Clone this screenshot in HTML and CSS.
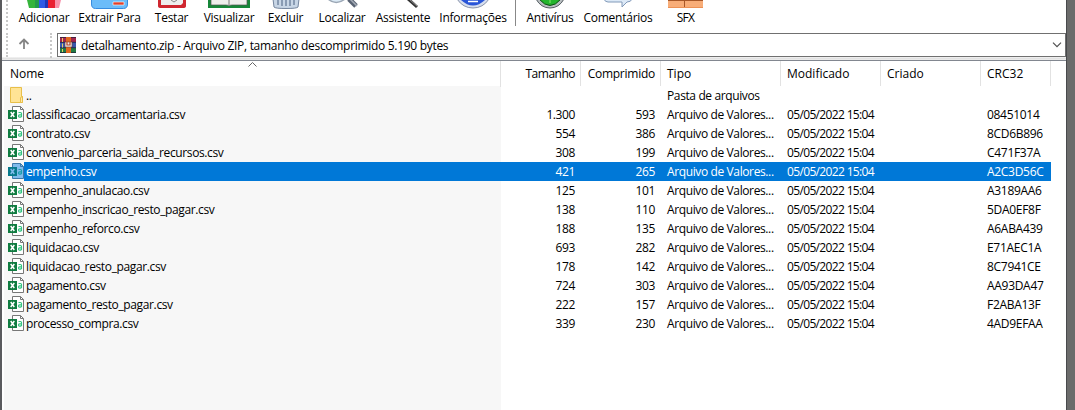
FILE: index.html
```html
<!DOCTYPE html>
<html lang="pt-BR">
<head>
<meta charset="utf-8">
<title>detalhamento.zip</title>
<link rel="stylesheet" href="styles.css">
</head>
<body>
<div class="window">
  <header class="toolbar">
    <div class="tool w-add"><svg width="34" height="9" viewBox="0 0 34 9"><path fill="#35b43b" d="M0 0h9v8H2z"/><path fill="#249a4a" d="M8 0h4v8H8z"/><path fill="#2f5be6" d="M12 0h7v8h-7z"/><path fill="#2038b8" d="M18 0h3v8h-3z"/><path fill="#e92032" d="M21 0h7v8h-7z"/><path fill="#f891ab" d="M28 0h6l-2 8h-4z"/></svg><span>Adicionar</span></div>
    <div class="tool w-ext"><svg width="37" height="9" viewBox="0 0 37 9"><path fill="#6cbcf9" stroke="#378ce0" d="M.5-1v5q0 4.500 4 4.500h28q4 0 4-4.500v-5"/><path fill="#e0402c" stroke="#fff" stroke-width=".6" d="M22 2h11v3H22z"/></svg><span>Extrair Para</span></div>
    <div class="tool w-test"><svg width="30" height="9" viewBox="0 0 30 9"><path fill="#cf2730" d="M1 0h28v6q0 2-3 2H4Q1 8 1 6z"/><path fill="#eee" d="M4 0h22v3l-2 2H4z"/><path fill="none" stroke="#888" d="M14 0l3 2 3-2"/></svg><span>Testar</span></div>
    <div class="tool w-view"><svg width="42" height="9" viewBox="0 0 42 9"><path fill="#168638" d="M0 0h42v8H0z"/><path fill="#eeeeec" stroke="#555" stroke-width=".7" d="M3-1v6h15q2 0 3 1 1-1 3-1h15v-6"/><path stroke="#777" d="M21 0v6"/></svg><span>Visualizar</span></div>
    <div class="tool w-del"><svg width="28" height="9" viewBox="0 0 28 9"><path fill="#c8d6e6" stroke="#75869e" d="M1-1l1 8q1 1.500 12 1.500T26 7l1-8"/><path stroke="#7488a2" stroke-width="1.500" d="M6 0v5m4-5v6m4-6v6m4-6v6m4-6v5"/></svg><span>Excluir</span></div>
    <div class="tool w-find"><svg width="34" height="9" viewBox="0 0 34 9"><path fill="#dbeaf6" stroke="#9ba7b5" stroke-width="1.500" d="M3-1q8 7 17 0"/><path stroke="#596373" stroke-width="5" d="M24-1l7 7"/><path stroke="#a4abb6" stroke-width="1.500" d="M24-2l8 8"/></svg><span>Localizar</span></div>
    <div class="tool w-wiz"><svg width="34" height="9" viewBox="0 0 34 9"><path stroke="#333" stroke-width="3" d="M21-2l10 9"/><path stroke="#999" d="M22-2l10 9"/></svg><span>Assistente</span></div>
    <div class="tool w-info"><svg width="34" height="9" viewBox="0 0 34 9"><path fill="#d6deee" stroke="#8994aa" d="M1-1q6 9 16 9t16-9"/><path fill="#2955d8" d="M5 0q12 11 24 0z"/><path stroke="#fff" stroke-width="1.500" d="M12 1.500h10"/></svg><span>Informações</span></div>
    <i class="tool-sep"></i>
    <div class="tool w-av"><svg width="30" height="9" viewBox="0 0 30 9"><path fill="#b9bec1" stroke="#555d62" d="M1-1q5 9 14 9t14-9"/><path fill="#24b52c" stroke="#124e18" d="M4-1q11 13 22 0z"/><path stroke="#8be573" d="M15 0v3"/></svg><span>Antivírus</span></div>
    <div class="tool w-com"><svg width="34" height="9" viewBox="0 0 34 9"><path fill="#dce9f7" stroke="#829ab9" d="M3-1q1 3 4 3h14v5l5-5q4 0 5-3"/></svg><span>Comentários</span></div>
    <div class="tool w-sfx"><svg width="35" height="9" viewBox="0 0 35 9"><path fill="#f8ad78" d="M0 0h35v8H0z"/><path stroke="#a75728" d="M0 .5h35M16.500 0v7"/><path stroke="#ec9155" d="M0 7.500h35"/></svg><span>SFX</span></div>
  </header>
  <div class="address">
    <div class="up"><svg width="12" height="12" viewBox="0 0 12 12" fill="none" stroke="#858585" stroke-width="1.800"><path d="M6 11V2M1.500 6L6 1.500 10.500 6"/></svg></div>
    <div class="path">
      <svg width="16" height="16" viewBox="0 0 16 16"><path fill="#a3264c" d="M0 0h16v5H0z"/><path fill="#3857ad" d="M0 5h16v6H0z"/><path fill="#237a42" d="M0 11h16v5H0z"/><path stroke="#20213b" stroke-width=".8" d="M0 .4h16M0 5.300h16M0 10.700h16M0 15.600h16"/><path stroke="#e7d260" d="M2.500 1v4m0 1.500v4m0 1.500v3"/><path fill="#df671e" d="M6 0h5v16H6z"/><path fill="#eee" stroke="#703c28" stroke-width=".6" d="M5 5h7v5H5z"/><path fill="none" stroke="#b44222" stroke-width="1.200" d="M7 5v3h3V5"/></svg>
      <span class="path-text">detalhamento.zip - Arquivo ZIP, tamanho descomprimido 5.190 bytes</span>
      <svg class="chev" width="10" height="6" viewBox="0 0 10 6" fill="none" stroke="#505050" stroke-width="1.200"><path d="M1 .7l4 4 4-4"/></svg>
    </div>
  </div>
  <main class="list">
    <div class="head">
      <span class="name">Nome<svg class="sort" width="9" height="5" viewBox="0 0 9 5" fill="none" stroke="#666"><path d="M.5 4.500l4-4 4 4"/></svg></span><span class="num size">Tamanho</span><span class="num">Comprimido</span><span>Tipo</span><span>Modificado</span><span>Criado</span><span>CRC32</span>
    </div>
    <div class="rows" id="rows"></div>
  </main>
</div>
<script src="files.js"></script>
</body>
</html>
```
FILE: files.js
```js
const files = [
  ["classificacao_orcamentaria.csv", "1.300", "593", "08451014"],
  ["contrato.csv", "554", "386", "8CD6B896"],
  ["convenio_parceria_saida_recursos.csv", "308", "199", "C471F37A"],
  ["empenho.csv", "421", "265", "A2C3D56C"],
  ["empenho_anulacao.csv", "125", "101", "A3189AA6"],
  ["empenho_inscricao_resto_pagar.csv", "138", "110", "5DA0EF8F"],
  ["empenho_reforco.csv", "188", "135", "A6ABA439"],
  ["liquidacao.csv", "693", "282", "E71AEC1A"],
  ["liquidacao_resto_pagar.csv", "178", "142", "8C7941CE"],
  ["pagamento.csv", "724", "303", "AA93DA47"],
  ["pagamento_resto_pagar.csv", "222", "157", "F2ABA13F"],
  ["processo_compra.csv", "339", "230", "4AD9EFAA"]
];
const folder = '<svg class="icon" width="16" height="16" viewBox="0 0 16 16"><path fill="#ffe495" stroke="#e8bf49" d="M2.500.5h11v9h1v6h-12z"/><path fill="#ffe9a9" stroke="#e8bf49" d="M12.500 15.500v-5l2-1v6z"/></svg>';
const csv = '<svg class="icon" width="16" height="16" viewBox="0 0 16 16"><path class="page" d="M4.500.5h8l3 3v12h-11z"/><path class="fold" d="M12.500.5v3h3"/><path class="badge" d="M0 4h9v9H0z"/><path class="cross" d="M2.700 6l3.600 5M6.300 6l-3.600 5"/><path class="letter" d="M10.500 6.500h2q1 0 1 1v3.800M13.500 8.800h-2q-1 0-1 1.200t1 1.200h1l1-1"/></svg>';
const row = (icon, name, size, packed, type, date, crc) =>
  `<div class="row${name === "empenho.csv" ? " selected" : ""}"><span class="name">${icon}<b>${name}</b></span><span class="num">${size}</span><span class="num">${packed}</span><span class="type">${type}</span><span class="date">${date}</span><span></span><span class="crc">${crc}</span></div>`;
document.getElementById("rows").innerHTML =
  row(folder, "..", "", "", "Pasta de arquivos", "", "") +
  files.map(f => row(csv, f[0], f[1], f[2], "Arquivo de Valores...", "05/05/2022 15:04", f[3])).join("");
```
FILE: styles.css
```css
* { box-sizing: border-box; }
body { margin: 0; width: 1075px; height: 410px; overflow: hidden; background: #6b6b6b; font: 12px/19px "Open Sans", sans-serif; color: #000; }
svg { display: block; flex: none; overflow: hidden; }
span { white-space: nowrap; }
.window { width: 1067px; height: 410px; background: #fff; border-left: 2px solid #5a5b5e; border-right: 1px solid #48494c; display: flex; flex-direction: column; }
.toolbar { height: 30px; display: flex; padding-left: 8px; flex: none; margin-left: 4px; border-left: 2px dotted #c8c8c8; }
.tool { display: flex; flex-direction: column; align-items: center; flex: none; line-height: 18px; letter-spacing: -.25px; }
.w-add { width: 56px; } .w-ext { width: 75px; } .w-test { width: 49px; } .w-view { width: 66px; }
.w-del { width: 47px; } .w-find { width: 66px; } .w-wiz { width: 56px; } .w-info { width: 84px; }
.tool-sep { width: 1px; height: 26px; background: #888; }
.w-av { width: 68px; } .w-com { width: 68px; } .w-sfx { width: 67px; letter-spacing: -.7px; }
.address { height: 31px; flex: none; display: flex; padding: 3px 0 3px 4px; border-bottom: 1px solid #828790; background: linear-gradient(#fff 27px, #dedede 28px, #eee 30px); }
.up { width: 51px; padding: 5px 0 0 10px; border-left: 2px dotted #c8c8c8; position: relative; }
.up::after { content: ""; position: absolute; left: 42px; top: 0; height: 25px; border-left: 2px dotted #c8c8c8; }
.path { flex: 1; height: 24px; border: 1px solid #707070; background: #fff; display: flex; align-items: center; padding: 0 3px 0 2px; }
.path-text { margin-left: 5px; flex: 1; letter-spacing: -.3px; }
.list { flex: 1; display: flex; flex-direction: column; }
.head, .row { display: grid; grid-template-columns: 499px 80px 80px 120px 100px 100px 70px; width: 1049px; }
.head { height: 25px; line-height: 26px; }
.head > span { border-right: 1px solid #e2e2e2; padding-left: 6px; }
.head .name { padding-left: 8px; position: relative; }
.sort { position: absolute; left: 246px; top: 1px; }
.head .num, .row .num { text-align: right; padding: 0 6px 0 0; }
.head .num { letter-spacing: -.25px; padding-right: 5px; }
.head .size { letter-spacing: -.5px; }
.rows { flex: 1; background: linear-gradient(90deg, #fff 2px, #f7f7f7 2px, #f7f7f7 499px, #fff 499px); }
.row { height: 19px; line-height: 20px; letter-spacing: -.3px; }
.row > span { padding-left: 6px; }
.row .name { display: flex; padding-left: 6px; letter-spacing: -.37px; }
.row b { font-weight: 400; padding-left: 2px; flex: 1; }
.row .type { letter-spacing: -.38px; }
.row .date { letter-spacing: -.65px; }
.row .num { letter-spacing: -.4px; }
.icon { margin-top: 1px; }
.page { fill: #fff; stroke: #777; }
.fold { fill: none; stroke: #777; }
.badge { fill: #107c41; }
.cross { stroke: #fff; stroke-width: 1.5; }
.letter { fill: none; stroke: #33c481; stroke-width: 1.2; }
.selected { color: #fff; background: linear-gradient(90deg, transparent 22px, #0078d7 22px); }
.selected .page { fill: #80bbeb; stroke: #3c78a8; }
.selected .fold { stroke: #3c78a8; }
.selected .badge { fill: #087a8c; }
.selected .cross { stroke: #80bbeb; }
.selected .letter { stroke: #1a9eac; }
```
